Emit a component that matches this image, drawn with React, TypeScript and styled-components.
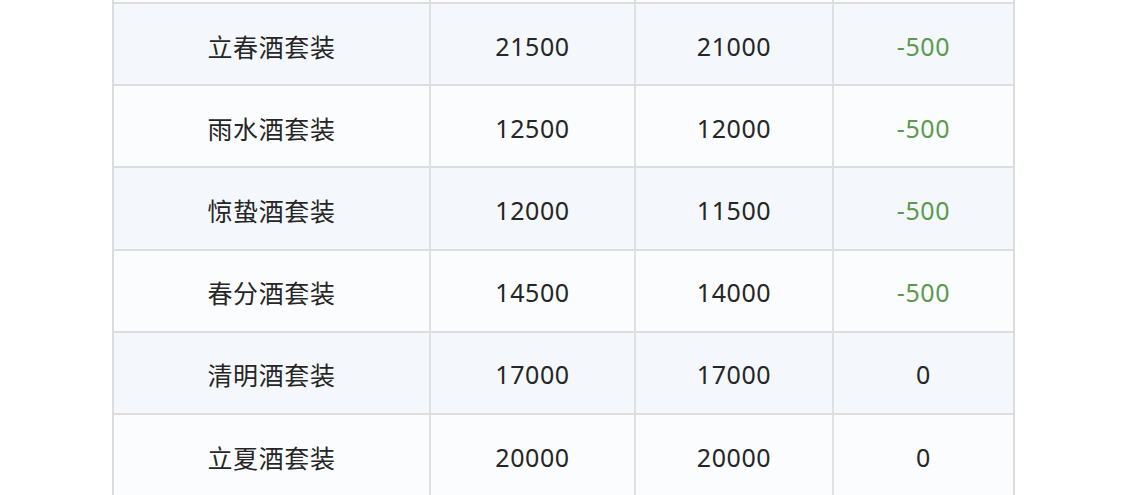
import styled, { createGlobalStyle } from 'styled-components';

type Row = {
  name: string;
  before: string;
  after: string;
  diff: string;
};

const rows: Row[] = [
  { name: '立春酒套装', before: '21500', after: '21000', diff: '-500' },
  { name: '雨水酒套装', before: '12500', after: '12000', diff: '-500' },
  { name: '惊蛰酒套装', before: '12000', after: '11500', diff: '-500' },
  { name: '春分酒套装', before: '14500', after: '14000', diff: '-500' },
  { name: '清明酒套装', before: '17000', after: '17000', diff: '0' },
  { name: '立夏酒套装', before: '20000', after: '20000', diff: '0' },
];

const GlobalStyle = createGlobalStyle`
  html, body {
    margin: 0;
    padding: 0;
    background: #ffffff;
    overflow: hidden;
  }
  body {
    font-family: "Noto Sans", "Noto Sans CJK SC", sans-serif;
  }
`;

const Page = styled.div`
  width: 1125px;
  height: 495px;
  overflow: hidden;
  padding-left: 112px;
  box-sizing: border-box;
`;

const Table = styled.div`
  display: grid;
  grid-template-columns: 315px 205px 198px 181px;
  width: 903px;
  border-left: 2px solid #dcdcdc;
  border-right: 2px solid #dcdcdc;
  box-sizing: border-box;
`;

// the row above the visible area, cut off by the screenshot
const CutRow = styled.div`
  grid-column: 1 / -1;
  display: grid;
  grid-template-columns: subgrid;
  height: 2px;
`;

const Filler = styled.div<{ $first?: boolean }>`
  height: 2px;
  background: #fbfcfd;
  border-left: ${(p) => (p.$first ? 'none' : '2px solid #e0e0e0')};
`;

const Cell = styled.div<{ $striped: boolean; $first?: boolean; $tone?: 'green' }>`
  height: 77.2px;
  display: flex;
  align-items: center;
  justify-content: center;
  padding-top: 3px;
  border-top: 2px solid #dddddd;
  border-left: ${(p) => (p.$first ? 'none' : '2px solid #e0e0e0')};
  background: ${(p) => (p.$striped ? '#f4f8fc' : '#fbfcfd')};
  color: ${(p) => (p.$tone === 'green' ? '#5c9a50' : '#262626')};
  font-size: 25px;
  letter-spacing: 0.6px;
`;

export default function App() {
  return (
    <>
      <GlobalStyle />
      <Page>
        <Table>
          <CutRow>
            <Filler $first />
            <Filler />
            <Filler />
            <Filler />
          </CutRow>
          {rows.map((r, i) => {
            const striped = i % 2 === 0;
            return [
              <Cell key={`${i}-n`} $first $striped={striped}>
                {r.name}
              </Cell>,
              <Cell key={`${i}-b`} $striped={striped}>
                {r.before}
              </Cell>,
              <Cell key={`${i}-a`} $striped={striped}>
                {r.after}
              </Cell>,
              <Cell
                key={`${i}-d`}
                $striped={striped}
                $tone={r.diff.startsWith('-') ? 'green' : undefined}
              >
                {r.diff}
              </Cell>,
            ];
          })}
        </Table>
      </Page>
    </>
  );
}
